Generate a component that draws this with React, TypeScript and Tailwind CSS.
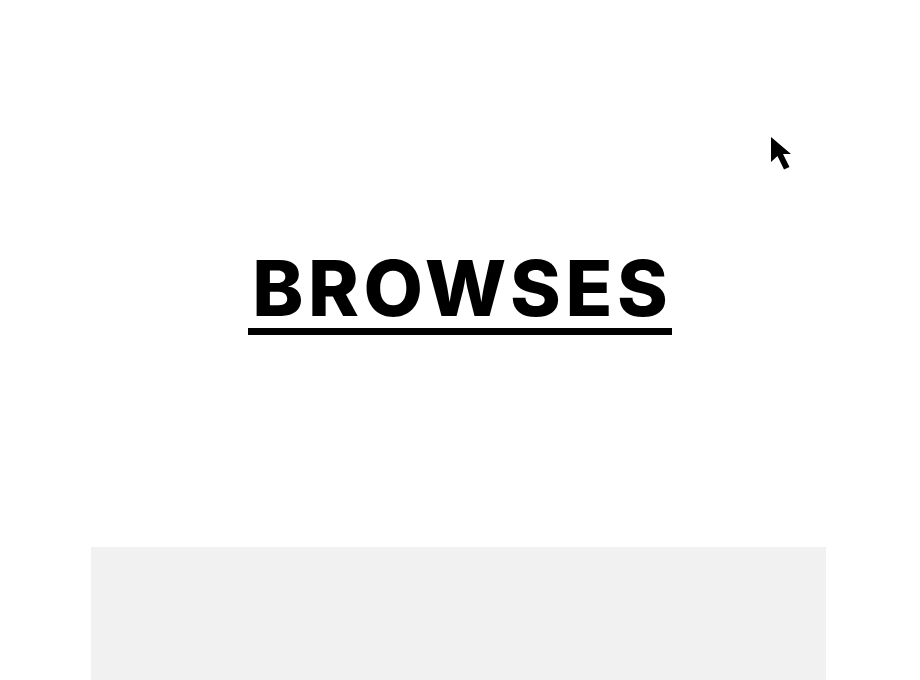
export default function App() {
  return (
    <div className="w-[920px] h-[680px] bg-white overflow-hidden flex flex-col items-center font-['Inter',sans-serif]">
      {/* cursor */}
      <div className="relative w-full h-[250px]">
        <svg className="absolute left-[770px] top-[136px]" width="24" height="36" viewBox="0 0 24 36">
          <path d="M1 1 L1 26 L7.5 20 L14 33.5 L19.5 31 L13 18 L21 18 Z" fill="#000" />
        </svg>
      </div>

      {/* heading */}
      <div className="flex flex-col items-center">
        <h1 className="text-[77px] leading-none font-extrabold tracking-[4.5px] pl-[4.5px] text-black">BROWSES</h1>
        <div className="w-full h-[7px] bg-black mt-[1px]" />
      </div>

      {/* panel */}
      <div className="mt-auto self-start ml-[91px] w-[735px] h-[133px] bg-[#f1f1f1]" />
    </div>
  )
}
